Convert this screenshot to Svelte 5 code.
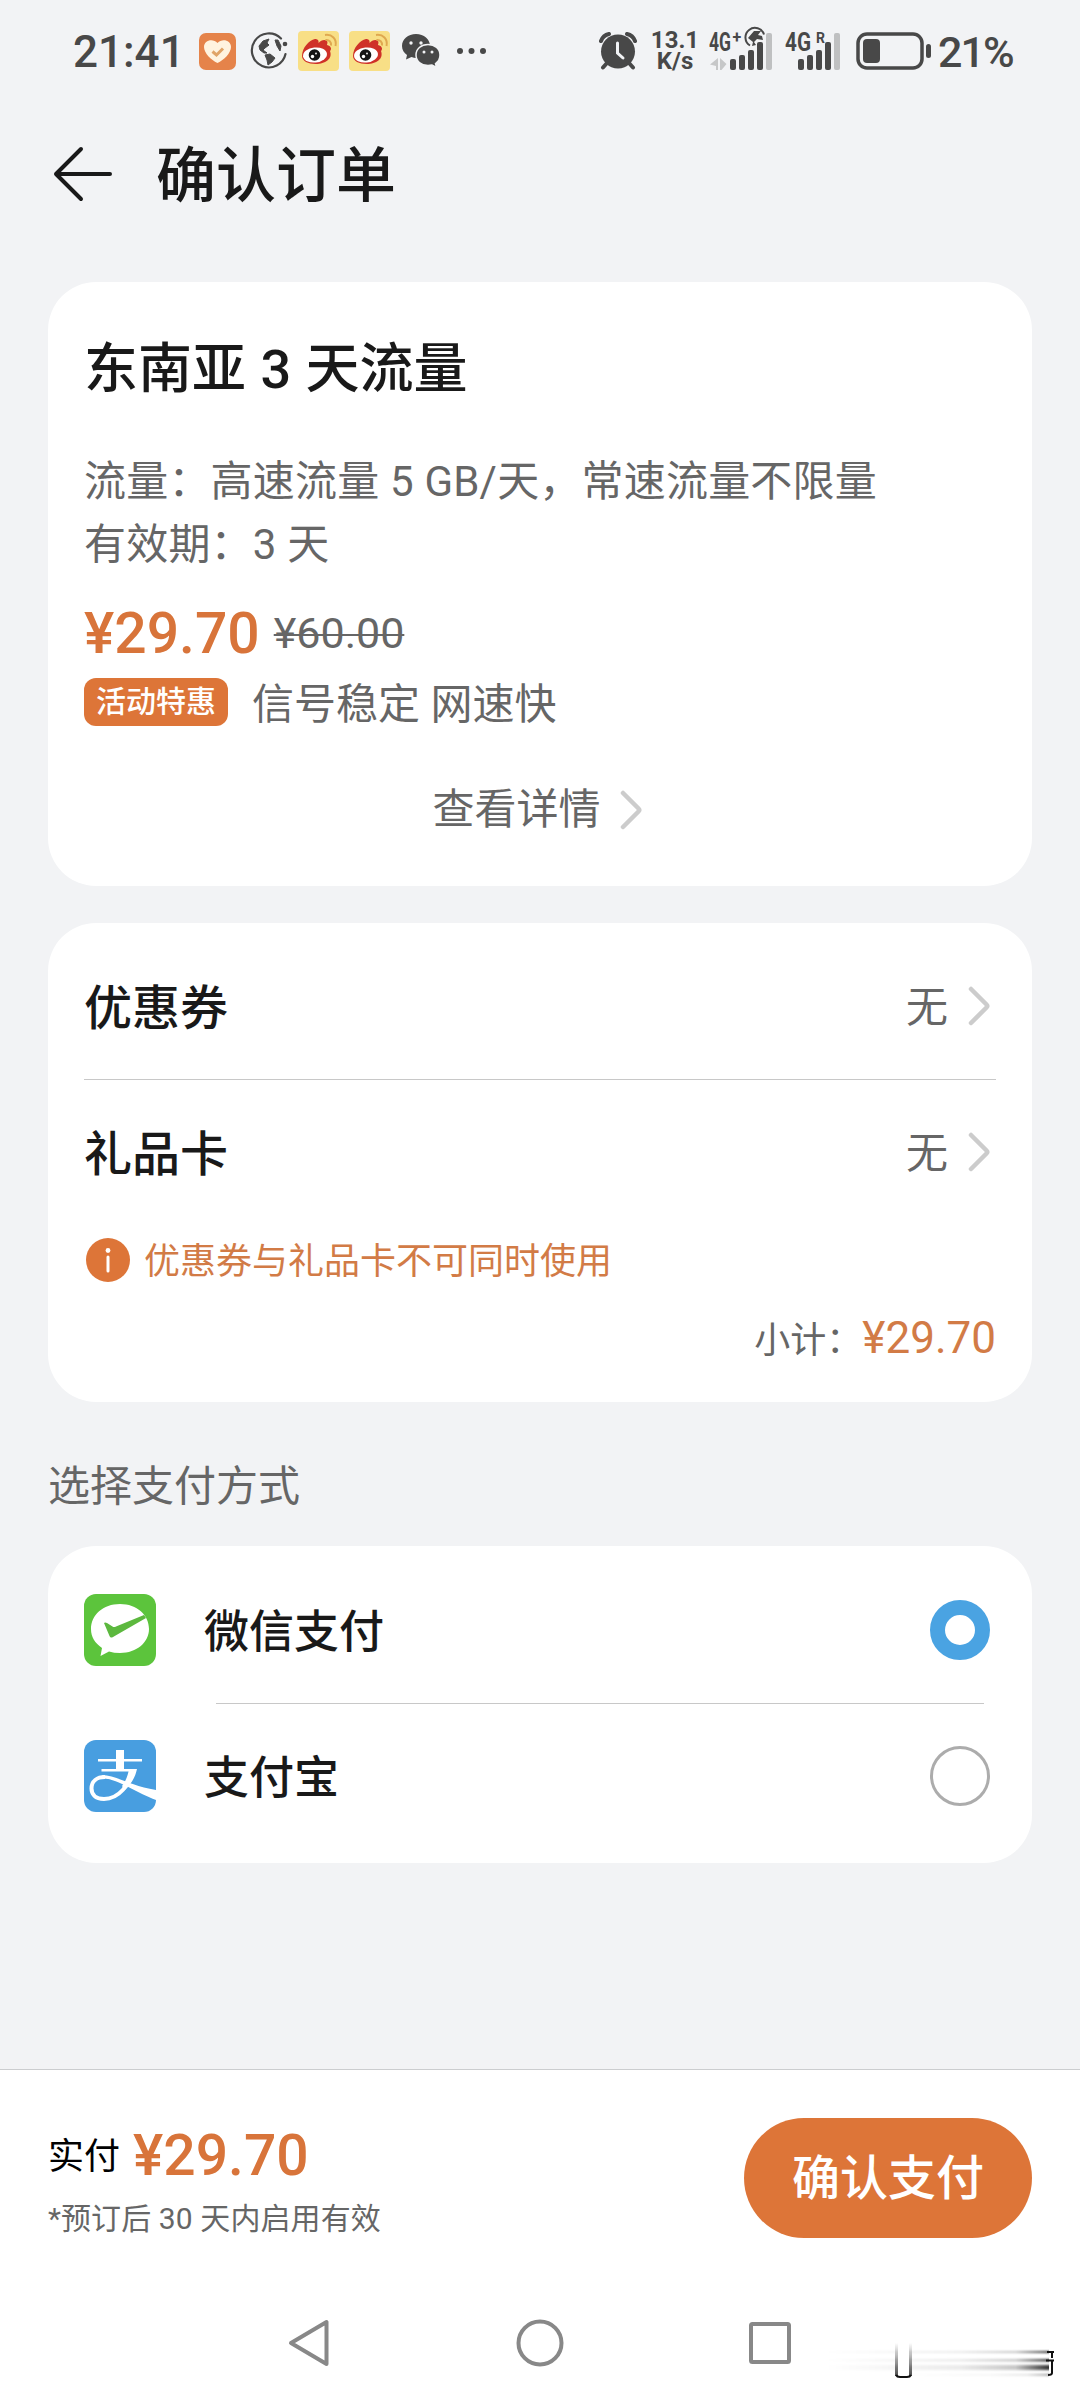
<script lang="ts">
  const plan = {
    name: "东南亚 3 天流量",
    traffic: "流量：高速流量 5 GB/天，常速流量不限量",
    validity: "有效期：3 天",
    price: "¥29.70",
    oldPrice: "¥60.00",
    tag: "活动特惠",
    desc: "信号稳定 网速快",
  };

  const discounts = [
    { label: "优惠券", value: "无" },
    { label: "礼品卡", value: "无" },
  ];

  const methods = [
    { id: "wechat", label: "微信支付" },
    { id: "alipay", label: "支付宝" },
  ];

  let selected = $state("wechat");

  // x, top of each signal bar; the last one is the empty level
  const bars = [
    [21, 28],
    [30, 24],
    [39, 19],
    [48, 11],
    [57, 2],
  ];
</script>

{#snippet chevron()}
  <svg class="chevron" viewBox="0 0 22 40" width="22" height="40">
    <path d="M3 3 L18.5 18.5 Q20 20 18.5 21.5 L3 37" />
  </svg>
{/snippet}

{#snippet weibo()}
  <svg class="weibo" viewBox="0 0 41 40" width="41" height="40">
    <rect width="41" height="40" rx="4" fill="#f8df86" />
    <path
      d="M4 25 C4 17 11 9 17 8 C20 7.500 21 10 20.500 12 C23 9 27 8 29 10 C30 11.500 29 13 29 14 C33 15 34 18 32 20 C35 28 27 33 18 33 C10 33 4 30 4 25Z"
      fill="#cf3128"
    />
    <ellipse cx="17" cy="24" rx="12" ry="7.500" fill="#fff" transform="rotate(-6 17 24)" />
    <circle cx="16.500" cy="24" r="5.800" fill="#151515" />
    <circle cx="14.500" cy="25.500" r="1.700" fill="#fff" />
    <circle cx="18" cy="22.500" r=".9" fill="#fff" />
    <path
      d="M27 4 C34 3 39 8 37.500 15 M27.500 9 C31 8.500 33.500 11 33 14.500"
      fill="none"
      stroke="#dfa850"
      stroke-width="2"
    />
  </svg>
{/snippet}

{#snippet levels()}
  {#each bars as [x, y], i}
    <rect {x} {y} width="6" height={39 - y} rx="2" fill={i === 4 ? "#bfc0c1" : "#484848"} />
  {/each}
{/snippet}

<div class="screen">
  <div class="status">
    <span class="clock">21:41</span>
    <svg class="health" viewBox="0 0 37 37" width="37" height="37">
      <rect width="37" height="37" rx="7" fill="#e5834a" />
      <path
        d="M18.500 30 C12 27 5 20 5 14 C5 7 14 5 18.500 10 C23 5 32 7 32 14 C32 20 25 27 18.500 30Z"
        fill="#fff3df"
      />
      <path d="M13.500 18.500 L17.500 22 L24 15.500" fill="none" stroke="#e0a467" stroke-width="3" />
    </svg>
    <svg class="globe" viewBox="0 0 38 38" width="38" height="38">
      <path
        d="M31 6.500 A17 17 0 1 0 35.500 22"
        fill="none"
        stroke="#484848"
        stroke-width="2.200"
        stroke-linecap="round"
      />
      <circle cx="35" cy="12" r="2.300" fill="#484848" />
      <path
        d="M9 14 L13 9 L19 7 L17 11 L19 13 L15 16 L13 18 L17 21 L14 21 L10 18Z M15 23 L20 22 L25 26 L22 30 L18 33 L17 28Z M25 8 L28 8 L31 14 L30 19 L27 14Z"
        fill="#484848"
        stroke="#484848"
        stroke-width="1"
        stroke-linejoin="round"
      />
    </svg>
    {@render weibo()}
    {@render weibo()}
    <svg class="wechat" viewBox="0 0 38 34" width="38" height="34">
      <path
        d="M14 0 C6 0 0 5 0 12 C0 16 2 19 5 21 L4 25.500 L9.500 23 Q12 24 14 24 C22 24 28 19 28 12 C28 5 22 0 14 0Z"
        fill="#484848"
      />
      <path
        d="M26 10.500 C19 10.500 14 15 14 21 C14 27 19 31.500 26 31.500 Q28 31.500 30 31 L34.500 33.500 L33.500 29.500 C36.500 27.500 38 24.500 38 21 C38 15 33 10.500 26 10.500Z"
        fill="#484848"
        stroke="#f2f3f5"
        stroke-width="1.500"
      />
      <g fill="#f2f3f5">
        <circle cx="9" cy="9" r="1.700" />
        <circle cx="19" cy="9" r="1.700" />
        <circle cx="22" cy="18" r="1.500" />
        <circle cx="30" cy="18" r="1.500" />
      </g>
    </svg>
    <svg class="more" viewBox="0 0 30 8" width="30" height="8">
      <circle cx="4" cy="4" r="3" /><circle cx="15.500" cy="4" r="3" /><circle cx="27" cy="4" r="3" />
    </svg>

    <svg class="alarm" viewBox="0 0 38 38" width="38" height="38">
      <circle cx="19" cy="19.500" r="17" fill="#484848" />
      <path
        d="M2 9 A11 11 0 0 1 10 2 M28 2 A11 11 0 0 1 36 9 M8 31 L4 35.500 M30 31 L34 35.500"
        fill="none"
        stroke="#484848"
        stroke-width="4"
        stroke-linecap="round"
      />
      <path d="M18.500 11 V21 L24 26" fill="none" stroke="#f2f3f5" stroke-width="3" stroke-linecap="round" />
    </svg>
    <div class="speed"><span>13.1</span><span>K/s</span></div>
    <svg class="signal" viewBox="0 -8 66 52" width="66" height="52">
      <text x="0" y="20" class="net" textLength="22" lengthAdjust="spacingAndGlyphs">4G</text>
      <text x="23.5" y="12" class="plus">+</text>
      {@render levels()}
      <path
        d="M55 3.500 A9.500 9.500 0 1 0 41 14.500"
        fill="none"
        stroke="#484848"
        stroke-width="2"
      />
      <path d="M39 7 L45 0 L52 0 L49 4 L53 5 L54 9 L48 8 L45 11 L47 14 L43 15 L44 11Z" fill="#484848" />
      <path d="M9 27 V39 H7 V35 L1 33.500Z M11 27 L17.500 33 L12.500 39 H11Z" fill="#c6c7c8" />
    </svg>
    <svg class="signal second" viewBox="0 -8 66 52" width="66" height="52">
      <text x="8" y="20" class="net" textLength="26" lengthAdjust="spacingAndGlyphs">4G</text>
      <text x="39" y="12" class="roam">R</text>
      {@render levels()}
    </svg>
    <svg class="battery" viewBox="0 0 75 38" width="75" height="38">
      <rect x="2" y="2" width="64" height="34" rx="9" fill="none" stroke="#484848" stroke-width="3.500" />
      <rect x="7" y="7" width="17" height="24" rx="4" fill="#484848" />
      <rect x="70" y="12" width="5" height="14" rx="2.500" fill="#484848" />
    </svg>
    <span class="percent">21%</span>
  </div>

  <header>
    <svg class="back" viewBox="0 0 60 56" width="60" height="56">
      <path d="M28 3 L3 28 L28 53 M3 28 H57" />
    </svg>
    <h1>确认订单</h1>
  </header>

  <main>
    <section class="card plan">
      <h2>{plan.name}</h2>
      <p>{plan.traffic}</p>
      <p>{plan.validity}</p>
      <div class="prices">
        <span class="price">{plan.price}</span>
        <s>{plan.oldPrice}</s>
      </div>
      <div class="promo">
        <span class="tag">{plan.tag}</span>
        <span>{plan.desc}</span>
      </div>
      <div class="details">
        <span>查看详情</span>
        {@render chevron()}
      </div>
    </section>

    <section class="card discounts">
      {#each discounts as item}
        <div class="row">
          <span class="label">{item.label}</span>
          <span class="value">{item.value}</span>
          {@render chevron()}
        </div>
      {/each}
      <div class="notice">
        <svg viewBox="0 0 44 44" width="44" height="44">
          <circle cx="22" cy="22" r="22" fill="#dd7538" />
          <circle cx="22" cy="12.500" r="2.400" fill="#fff" />
          <path d="M22 19 V33" stroke="#fff" stroke-width="3" stroke-linecap="round" />
        </svg>
        <span>优惠券与礼品卡不可同时使用</span>
      </div>
      <div class="subtotal">
        <span>小计：</span>
        <b>{plan.price}</b>
      </div>
    </section>

    <h3>选择支付方式</h3>

    <section class="card methods">
      {#each methods as m}
        <button class="method" onclick={() => (selected = m.id)}>
          {#if m.id === "wechat"}
            <svg viewBox="0 0 72 72" width="72" height="72">
              <rect width="72" height="72" rx="12" fill="#5cc43c" />
              <path
                d="M36 10 C19 10 7 21 7 35 C7 43 11 49 18 54 L16.500 62 L25 57.500 Q30 59 36 59 C53 59 65 48 65 35 C65 21 53 10 36 10Z"
                fill="#fff"
              />
              <path
                d="M20 29 Q21 28 23 29 L28.500 32.500 Q30 33.500 32 32.500 L60 21 L62 24 L29 43 Q26.500 44.500 25.500 42Z"
                fill="#5cb83e"
              />
            </svg>
          {:else}
            <svg viewBox="0 0 72 72" width="72" height="72">
              <rect width="72" height="72" rx="12" fill="#489ee0" />
              <path d="M32 10 H40 V19 H58 V21.500 H40 V29 H32 V21.500 H14 V19 H32Z" fill="#fff" />
              <path d="M17.500 29 H52 V31.500 H17.500Z" fill="#fff" />
              <path
                d="M49 30 C46 44 35 59 20 59 C11 59 7.500 54 7.500 48.500 C7.500 41 13 37 21 37"
                fill="none"
                stroke="#fff"
                stroke-width="4"
              />
              <path d="M45 29 H53 C51 38 47 44 41 50 L38 46 C42 41 44 35 45 29Z" fill="#fff" />
              <path d="M18 35 C32 35 46 46 72 50 V60 C55 54 34 39 20 38.500Z" fill="#fff" />
            </svg>
          {/if}
          <span>{m.label}</span>
          <i class:on={selected === m.id}></i>
        </button>
      {/each}
    </section>
  </main>

  <footer>
    <div class="pay">
      <div class="total">
        <div class="amount"><span>实付</span><span class="price">{plan.price}</span></div>
        <small>*预订后 30 天内启用有效</small>
      </div>
      <button class="confirm">确认支付</button>
    </div>
    <nav>
      <svg viewBox="0 0 44 48" width="44" height="48">
        <path d="M39.500 3 V45 L4 24Z" />
      </svg>
      <svg viewBox="0 0 48 48" width="48" height="48">
        <circle cx="24" cy="24" r="21.500" />
      </svg>
      <svg viewBox="0 0 44 48" width="44" height="48">
        <rect x="3" y="5" width="38" height="38" rx="1.500" />
      </svg>
    </nav>
    <svg class="smear" viewBox="0 0 236 40" width="236" height="40">
      <defs>
        <linearGradient id="fade-x">
          <stop offset="0" stop-color="#000" stop-opacity="0" />
          <stop offset=".6" stop-color="#000" stop-opacity=".08" />
          <stop offset=".85" stop-color="#000" stop-opacity=".22" />
          <stop offset="1" stop-color="#000" stop-opacity=".8" />
        </linearGradient>
        <linearGradient id="fade-y" x1="0" y1="0" x2="0" y2="1">
          <stop offset="0" stop-color="#000" stop-opacity="0" />
          <stop offset="1" stop-color="#000" stop-opacity=".7" />
        </linearGradient>
        <filter id="soft" x="-5%" y="-50%" width="110%" height="200%">
          <feGaussianBlur stdDeviation="0 1" />
        </filter>
      </defs>
      <g fill="url(#fade-x)" filter="url(#soft)">
        <rect x="4" y="10" width="223" height="2" />
        <rect x="4" y="18" width="223" height="2.500" />
        <rect x="4" y="24" width="223" height="5" />
        <rect x="80" y="33" width="147" height="1.500" opacity=".6" />
      </g>
      <rect x="76" y="2" width="11" height="33" fill="#fff" />
      <rect x="73" y="2" width="3" height="33" fill="url(#fade-y)" />
      <rect x="87" y="2" width="3" height="33" fill="url(#fade-y)" />
      <path
        d="M74 34 Q75 36 78 36 H85 Q88 36 89 34 M225 11 H232 M230 11 V17 M224 19.500 H232 M230 19.500 V32 Q230 34 226 34"
        fill="none"
        stroke="#111"
        stroke-width="2"
      />
    </svg>
  </footer>
</div>

<style>
  :global(body) {
    margin: 0;
    background: #f2f3f5;
  }

  .screen {
    position: relative;
    display: flex;
    flex-direction: column;
    box-sizing: border-box;
    width: 1080px;
    height: 2400px;
    overflow: hidden;
    background: #f2f3f5;
    color: #191919;
    font-family: Roboto, "Noto Sans CJK SC", sans-serif;
    line-height: 1.4;
  }

  svg {
    display: block;
    flex-shrink: 0;
  }

  h1,
  h2,
  h3,
  p {
    margin: 0;
  }

  button {
    border: 0;
    padding: 0;
    font: inherit;
    cursor: pointer;
  }

  /* Status bar */
  .status {
    display: flex;
    align-items: center;
    height: 102px;
    padding-left: 73px;
    color: #484848;
    font-weight: 500;
    white-space: nowrap;
  }

  .clock {
    width: 126px;
    padding-top: 3px;
    font-size: 44px;
  }

  .globe {
    margin-left: 14px;
  }

  .weibo {
    margin-left: 10px;
  }

  .wechat {
    margin-left: 12px;
  }

  .more {
    margin-left: 16px;
    fill: #484848;
  }

  .alarm {
    margin-left: 113px;
  }

  .speed {
    display: flex;
    flex-direction: column;
    align-items: center;
    width: 50px;
    margin-left: 13px;
    font-size: 24px;
    font-weight: 700;
    line-height: 21px;
  }

  .signal {
    margin: -4px 0 0 9px;
  }

  .signal.second {
    margin-left: 2px;
  }

  .net {
    font-size: 25px;
    font-weight: 700;
    fill: #484848;
  }

  .plus {
    font-size: 16px;
    font-weight: 700;
    fill: #484848;
  }

  .roam {
    font-size: 14px;
    font-weight: 700;
    fill: #484848;
  }

  .battery {
    margin-left: 13px;
  }

  .percent {
    margin-left: 7px;
    padding-top: 2px;
    font-size: 43px;
    letter-spacing: -2px;
  }

  /* Title */
  header {
    display: flex;
    align-items: center;
    gap: 43px;
    height: 144px;
    padding: 0 0 36px 53px;
  }

  .back {
    fill: none;
    stroke: #191919;
    stroke-width: 4;
    stroke-linecap: round;
    stroke-linejoin: round;
  }

  h1 {
    padding-top: 5px;
    font-size: 60px;
    font-weight: 500;
    line-height: 72px;
  }

  /* Cards */
  main {
    display: flex;
    flex-direction: column;
    height: 1787px;
    padding: 0 48px;
  }

  .card {
    box-sizing: border-box;
    flex-shrink: 0;
    border-radius: 48px;
    background: #fff;
    padding: 0 36px;
  }

  .plan {
    height: 604px;
    padding-top: 52px;
    color: #666;
    font-size: 42px;
    line-height: 63px;
  }

  .plan p {
    letter-spacing: 0.2px;
  }

  h2 {
    margin-bottom: 44px;
    color: #191919;
    font-size: 54px;
    font-weight: 500;
    line-height: 72px;
    word-spacing: 1px;
  }

  .prices {
    display: flex;
    align-items: center;
    gap: 14px;
    height: 69px;
    margin-top: 23px;
  }

  .price {
    color: #d8743a;
    font-size: 57px;
    font-weight: 500;
  }

  s {
    font-size: 43px;
    text-decoration-thickness: 2px;
  }

  .promo {
    display: flex;
    align-items: center;
    gap: 24px;
    height: 72px;
  }

  .tag {
    width: 144px;
    height: 48px;
    margin-bottom: 4px;
    border-radius: 12px;
    background: #dd7538;
    color: #fff;
    font-size: 30px;
    font-weight: 500;
    line-height: 48px;
    text-align: center;
  }

  .details {
    display: flex;
    align-items: center;
    justify-content: center;
    gap: 19px;
    margin-top: 38px;
    padding-right: 6px;
  }

  .chevron {
    fill: none;
    stroke: #ccc;
    stroke-width: 4.5;
    stroke-linecap: round;
  }

  .discounts {
    height: 479px;
    margin-top: 37px;
    padding-top: 12px;
  }

  .row {
    display: flex;
    align-items: center;
    height: 145px;
  }

  .row:first-child {
    height: 144px;
    border-bottom: 1px solid #c8c8c8;
  }

  .label {
    flex: 1;
    padding-top: 4px;
    font-size: 48px;
    font-weight: 500;
  }

  .value {
    margin-right: 20px;
    padding-top: 3px;
    color: #666;
    font-size: 42px;
  }

  .row .chevron {
    margin: 0 6px 2px 0;
  }

  .notice {
    display: flex;
    align-items: center;
    gap: 14px;
    height: 70px;
    padding-left: 2px;
    color: #d27b46;
    font-size: 36px;
  }

  .notice span {
    padding-top: 5px;
  }

  .subtotal {
    display: flex;
    align-items: center;
    justify-content: flex-end;
    height: 88px;
    color: #666;
    font-size: 36px;
  }

  .subtotal span {
    padding-top: 4px;
  }

  .subtotal b {
    color: #d27b46;
    font-size: 44px;
    font-weight: 400;
  }

  h3 {
    margin: 53px 0 28px;
    color: #666;
    font-size: 42px;
    font-weight: 400;
    line-height: 63px;
  }

  .methods {
    height: 317px;
    padding-top: 11px;
  }

  .method {
    display: flex;
    align-items: center;
    position: relative;
    width: 100%;
    height: 146px;
    background: none;
    color: #191919;
    font-size: 45px;
    font-weight: 500;
    text-align: left;
  }

  .method + .method::before {
    content: "";
    position: absolute;
    inset: 0 12px auto 132px;
    height: 1px;
    background: #c8c8c8;
  }

  .method span {
    flex: 1;
    margin-left: 48px;
    padding-top: 4px;
  }

  .method i {
    box-sizing: border-box;
    width: 60px;
    height: 60px;
    margin-right: 6px;
    border: 3px solid #acacac;
    border-radius: 50%;
  }

  .method i.on {
    border: 15px solid #4aa3e2;
  }

  /* Bottom bar */
  footer {
    flex: 1;
    border-top: 1px solid #cbcdcf;
    background: #fff;
  }

  .pay {
    display: flex;
    align-items: center;
    justify-content: space-between;
    height: 216px;
    padding: 0 48px;
  }

  .total {
    margin-top: 12px;
  }

  .amount {
    display: flex;
    align-items: center;
    gap: 13px;
    height: 70px;
    color: #000;
    font-size: 36px;
  }

  .amount span:first-child {
    padding-top: 3px;
  }

  small {
    display: block;
    color: #666;
    font-size: 30px;
    letter-spacing: 0.1px;
    line-height: 56px;
  }

  .confirm {
    width: 288px;
    height: 120px;
    padding-top: 2px;
    border-radius: 60px;
    background: #dd7538;
    color: #fff;
    font-size: 48px;
    font-weight: 500;
  }

  nav {
    display: flex;
    align-items: center;
    justify-content: space-between;
    width: 505px;
    height: 48px;
    margin: 33px auto 0 287px;
    fill: none;
    stroke: #888;
    stroke-width: 4;
    stroke-linejoin: round;
  }

  .smear {
    position: absolute;
    left: 822px;
    top: 2341px;
  }
</style>
